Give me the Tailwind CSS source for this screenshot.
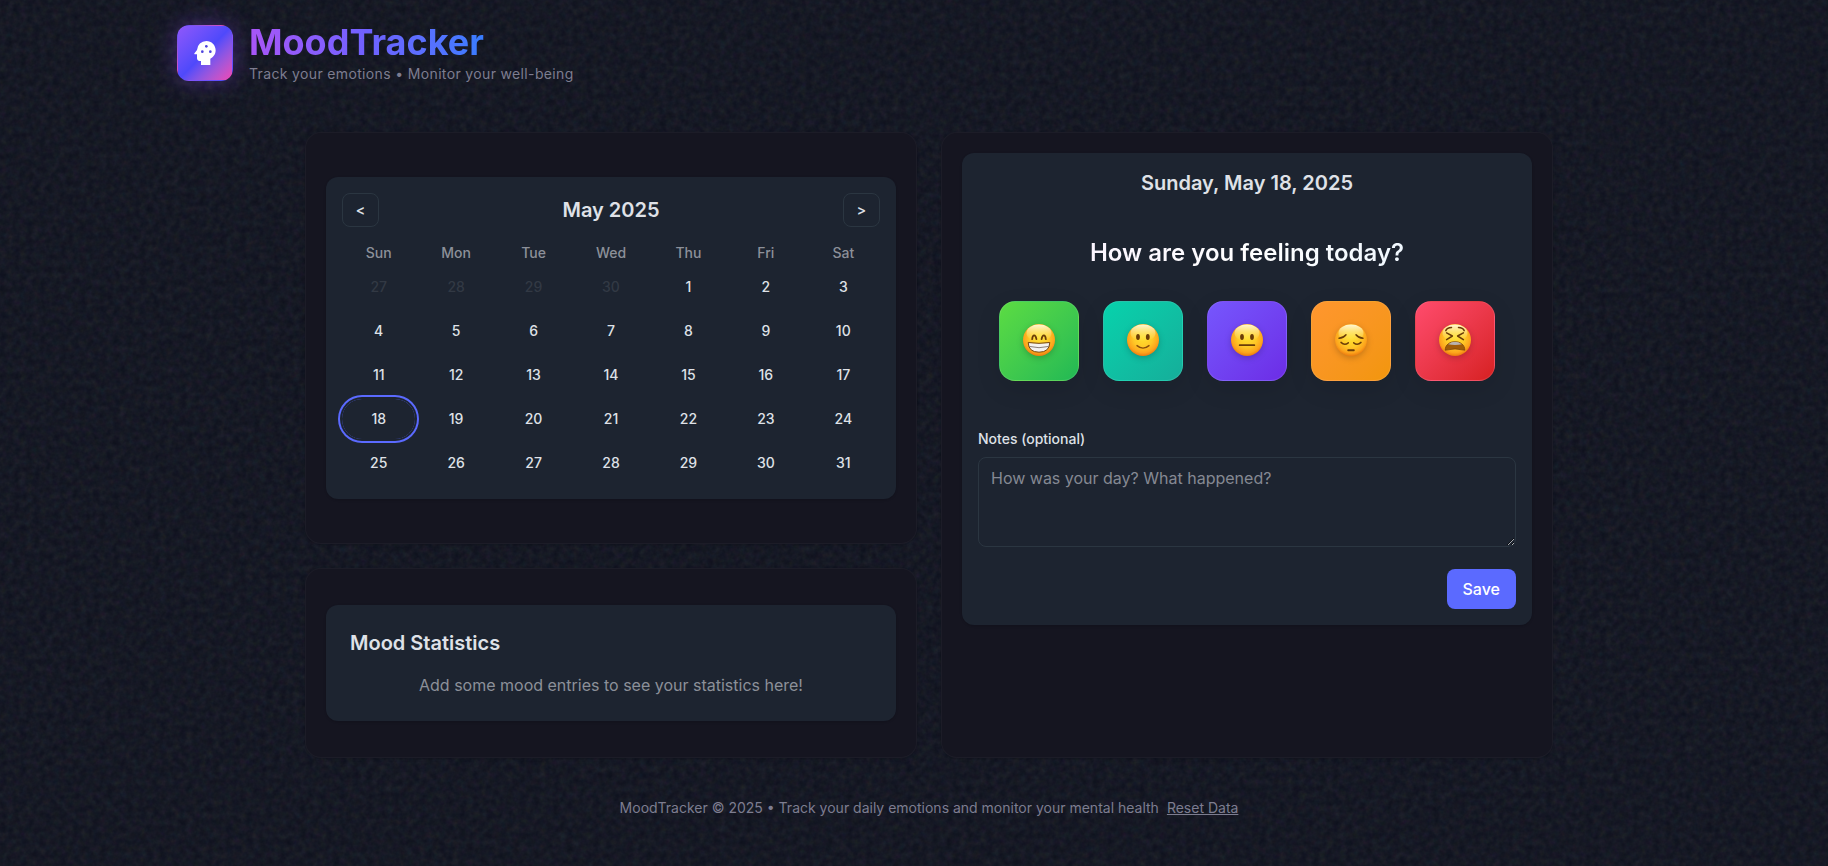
<!DOCTYPE html>
<html lang="en">
<head>
<meta charset="utf-8">
<meta name="viewport" content="width=device-width, initial-scale=1">
<title>MoodTracker</title>
<script src="https://cdn.jsdelivr.net/npm/@tailwindcss/browser@4"></script>
</head>
<body class="relative isolate min-h-screen bg-[#0d101c] pl-[30px] font-['Inter',sans-serif] text-[#dfe1e7]">

<!-- Grain over the page background -->
<svg class="absolute inset-0 -z-10 size-full opacity-10" aria-hidden="true">
  <filter id="grain"><feTurbulence type="fractalNoise" baseFrequency="0.15" numOctaves="3" stitchTiles="stitch"/></filter>
  <rect width="100%" height="100%" filter="url(#grain)"/>
</svg>

<!-- Shared paint for the mood faces -->
<svg class="absolute size-0" aria-hidden="true">
  <defs>
    <radialGradient id="face" cx="0.5" cy="0.42" r="0.6">
      <stop offset="0" stop-color="#ffe02e"/><stop offset="0.5" stop-color="#ffc927"/>
      <stop offset="0.8" stop-color="#fda41c"/><stop offset="1" stop-color="#e8720c"/>
    </radialGradient>
    <linearGradient id="shine" x1="0" y1="0" x2="0" y2="1">
      <stop offset="0" stop-color="#fffbe0" stop-opacity="0.95"/><stop offset="1" stop-color="#ffee70" stop-opacity="0"/>
    </linearGradient>
    <g id="head"><circle cx="16" cy="16" r="16" fill="url(#face)"/><ellipse cx="16" cy="9" rx="12.5" ry="8.5" fill="url(#shine)"/></g>
  </defs>
</svg>

<header class="mx-auto flex max-w-[1536px] items-center gap-4 px-4 pt-[22px]">
  <div class="flex size-14 items-center justify-center rounded-xl border border-transparent bg-linear-135 from-[#8f57fb] via-[#4f49fb] to-[#f043b4] shadow-[0_0_24px_rgba(139,70,246,0.4)]">
    <svg class="size-8" viewBox="0 0 24 24" aria-hidden="true">
      <path fill="#fff" d="M13 3c3.88 0 7 3.14 7 7 0 2.8-1.63 5.19-4 6.31V21H9v-3H8c-1.11 0-2-.89-2-2v-3H4.5c-.42 0-.66-.5-.42-.81L6 9.66A7.003 7.003 0 0 1 13 3"/>
      <g fill="#4d43dd"><circle cx="13" cy="7" r="1"/><circle cx="10" cy="11" r="1"/><circle cx="16" cy="11" r="1"/></g>
    </svg>
  </div>
  <div class="flex flex-col items-start gap-0.5">
    <h1 class="bg-linear-to-r from-[#a855f7] via-[#6f61ff] to-[#377dff] bg-clip-text text-4xl font-bold text-transparent">MoodTracker</h1>
    <p class="text-sm tracking-wide text-[#7d7d90]">Track your emotions • Monitor your well-being</p>
  </div>
</header>

<main class="mx-auto mt-12 grid max-w-[1280px] grid-cols-1 gap-6 px-4 lg:grid-cols-2">
  <section class="rounded-2xl border border-white/3 bg-[#151520] px-5 py-11 shadow-sm" aria-label="Calendar">
    <div class="rounded-xl bg-[#1d2430] p-4 shadow-sm">
      <div class="mb-4 flex items-center justify-between">
        <button class="h-[34px] w-[37px] rounded-lg border border-[#2b3641] text-sm font-semibold" aria-label="Previous month">&lt;</button>
        <h2 class="text-xl font-semibold">May 2025</h2>
        <button class="h-[34px] w-[37px] rounded-lg border border-[#2b3641] text-sm font-semibold" aria-label="Next month">&gt;</button>
      </div>
      <div class="mb-1 grid grid-cols-7 gap-1 text-center text-sm font-medium text-[#8c9099]">
        <div>Sun</div><div>Mon</div><div>Tue</div><div>Wed</div><div>Thu</div><div>Fri</div><div>Sat</div>
      </div>
      <div class="grid auto-rows-[40px] grid-cols-7 gap-1 text-sm font-medium">
        <button class="text-[#323944]" disabled>27</button><button class="text-[#323944]" disabled>28</button><button class="text-[#323944]" disabled>29</button><button class="text-[#323944]" disabled>30</button><button>1</button><button>2</button><button>3</button>
        <button>4</button><button>5</button><button>6</button><button>7</button><button>8</button><button>9</button><button>10</button>
        <button>11</button><button>12</button><button>13</button><button>14</button><button>15</button><button>16</button><button>17</button>
        <button class="rounded-full ring-2 ring-[#5b6aff] ring-offset-2 ring-offset-[#1d2430]" aria-current="date">18</button><button>19</button><button>20</button><button>21</button><button>22</button><button>23</button><button>24</button>
        <button>25</button><button>26</button><button>27</button><button>28</button><button>29</button><button>30</button><button>31</button>
      </div>
    </div>
  </section>

  <section class="rounded-2xl border border-white/3 bg-[#151520] p-5 shadow-sm lg:row-span-2" aria-label="Mood entry">
    <form class="rounded-xl bg-[#1d2430] p-4 shadow-sm">
      <h2 class="text-center text-xl font-semibold">Sunday, May 18, 2025</h2>
      <div class="mt-10 text-center">
        <h3 class="inline-block bg-linear-to-r from-[#fbf5ff] via-white to-[#f0f8ff] bg-clip-text text-2xl font-semibold text-transparent">How are you feeling today?</h3>
      </div>
      <div class="mt-8 flex flex-wrap justify-center gap-6">
        <button type="button" aria-label="Great" class="flex size-20 items-center justify-center rounded-2xl border border-white/10 bg-linear-135 from-[#5bdc42] to-[#20b954] pb-0.5 shadow-[0_8px_24px_rgba(0,0,0,0.1)]">
          <svg class="size-8 overflow-visible drop-shadow-[0_2px_3px_rgba(0,0,0,0.2)]" viewBox="0 0 32 32" aria-hidden="true"><use href="#head"/>
            <g fill="none" stroke="#6b3d08" stroke-width="1.8" stroke-linecap="round"><path d="M9.2 15.2c.4-5 3.4-5 4.2 0M18.6 15.2c.8-5 3.8-5 4.2 0"/></g>
            <path d="M5.2 18.5Q16 20.2 26.8 18.5Q26.5 28.2 16 28.2Q5.5 28.2 5.2 18.5Z" fill="#f4f2f0" stroke="#754510" stroke-width="1"/>
            <path d="M6 22.4Q16 25 26 22.4" fill="none" stroke="#8b8079" stroke-width="1"/>
          </svg>
        </button>
        <button type="button" aria-label="Good" class="flex size-20 items-center justify-center rounded-2xl border border-white/10 bg-linear-135 from-[#06d2ac] to-[#15ae9a] pb-0.5 shadow-[0_8px_24px_rgba(0,0,0,0.1)]">
          <svg class="size-8 overflow-visible drop-shadow-[0_2px_3px_rgba(0,0,0,0.2)]" viewBox="0 0 32 32" aria-hidden="true"><use href="#head"/>
            <g fill="#6b3d08"><ellipse cx="11" cy="13" rx="1.9" ry="2.9"/><ellipse cx="20.8" cy="13" rx="1.9" ry="2.9"/></g>
            <path d="M10 21.6Q16 26.6 22 21.6" fill="none" stroke="#8a4d0a" stroke-width="1.4" stroke-linecap="round"/>
          </svg>
        </button>
        <button type="button" aria-label="Okay" class="flex size-20 items-center justify-center rounded-2xl border border-white/10 bg-linear-135 from-[#7656fd] to-[#6c2ce6] pb-0.5 shadow-[0_8px_24px_rgba(0,0,0,0.1)]">
          <svg class="size-8 overflow-visible drop-shadow-[0_2px_3px_rgba(0,0,0,0.2)]" viewBox="0 0 32 32" aria-hidden="true"><use href="#head"/>
            <g fill="#6b3d08"><ellipse cx="11" cy="13" rx="1.9" ry="3"/><ellipse cx="21" cy="13" rx="1.9" ry="3"/><rect x="7.8" y="20.2" width="16.4" height="1.9" rx="0.9"/></g>
          </svg>
        </button>
        <button type="button" aria-label="Sad" class="flex size-20 items-center justify-center rounded-2xl border border-white/10 bg-linear-135 from-[#ff962e] to-[#f2960c] pb-0.5 shadow-[0_8px_24px_rgba(0,0,0,0.1)]">
          <svg class="size-8 overflow-visible drop-shadow-[0_2px_3px_rgba(0,0,0,0.2)]" viewBox="0 0 32 32" aria-hidden="true"><use href="#head"/>
            <g fill="none" stroke="#6b3d08" stroke-width="1.5" stroke-linecap="round"><path d="M4 14.2Q8.500 14 11 10.800M28 14.2Q23.500 14 21 10.800M6 18.400Q9.500 21.800 13.300 18.800M26 18.400Q22.500 21.800 18.700 18.800"/><path d="M13.200 26.200H18.800" stroke-width="1.900"/></g>
          </svg>
        </button>
        <button type="button" aria-label="Awful" class="flex size-20 items-center justify-center rounded-2xl border border-white/10 bg-linear-135 from-[#ff4b6c] to-[#d72020] pb-0.5 shadow-[0_8px_24px_rgba(0,0,0,0.1)]">
          <svg class="size-8 overflow-visible drop-shadow-[0_2px_3px_rgba(0,0,0,0.2)]" viewBox="0 0 32 32" aria-hidden="true"><use href="#head"/>
            <g fill="none" stroke="#6b3d08" stroke-width="1.5" stroke-linecap="round" stroke-linejoin="round"><path d="M6.8 6.6Q8 3.8 12.5 3.600M25.200 6.600Q24 3.800 19.500 3.600M7.600 8.800L13.400 12L7.600 15.600M24.400 8.800L18.600 12L24.400 15.600"/></g>
            <path d="M6.200 26.200C6.200 14.800 25.800 14.800 25.800 26.200Q16 23.600 6.200 26.200Z" fill="#a05c08" stroke="#7a430a" stroke-width="0.8"/>
            <path d="M9.200 20.200Q16 15.400 22.800 20.200Q16 21.800 9.200 20.200Z" fill="#b9b2ae"/>
          </svg>
        </button>
      </div>
      <label for="notes" class="mt-12 block text-sm font-medium">Notes (optional)</label>
      <textarea id="notes" placeholder="How was your day? What happened?" class="mt-2 block h-[90px] w-full resize-y rounded-lg border border-[#2b3641] bg-transparent px-3 py-2 text-base placeholder:text-[#858993]"></textarea>
      <div class="mt-[22px] flex justify-end">
        <button type="button" class="h-10 rounded-lg bg-[#5b6aff] px-4 text-base font-medium text-white">Save</button>
      </div>
    </form>
  </section>

  <section class="rounded-2xl border border-white/3 bg-[#151520] px-5 py-9 shadow-sm" aria-label="Statistics">
    <div class="rounded-xl bg-[#1d2430] p-6 shadow-sm">
      <h2 class="text-xl font-semibold">Mood Statistics</h2>
      <p class="mt-4 text-center text-base text-[#8c9099]">Add some mood entries to see your statistics here!</p>
    </div>
  </section>
</main>

<footer class="flex flex-wrap justify-center gap-2 px-4 py-10 text-sm text-[#7d7d90]">
  <p>MoodTracker © 2025 • Track your daily emotions and monitor your mental health</p>
  <a href="#" class="underline">Reset Data</a>
</footer>
</body>
</html>
